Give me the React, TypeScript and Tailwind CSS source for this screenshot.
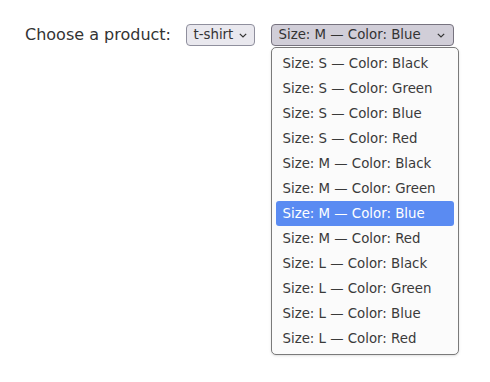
import React from 'react';

const options = [
  'Size: S — Color: Black',
  'Size: S — Color: Green',
  'Size: S — Color: Blue',
  'Size: S — Color: Red',
  'Size: M — Color: Black',
  'Size: M — Color: Green',
  'Size: M — Color: Blue',
  'Size: M — Color: Red',
  'Size: L — Color: Black',
  'Size: L — Color: Green',
  'Size: L — Color: Blue',
  'Size: L — Color: Red',
];

const Chevron = () => (
  <svg width="8" height="5" viewBox="0 0 8 5" className="shrink-0">
    <path d="M0.8 0.8 L4 4 L7.2 0.8" fill="none" stroke="#333" strokeWidth="1.2" />
  </svg>
);

export default function App() {
  return (
    <div className="w-[490px] h-[382px] bg-white font-['DejaVu_Sans',sans-serif] text-[#333]">
      <div className="flex items-center pt-[24px] pl-[25px]">
        <span className="text-[16px] leading-[22px] mr-[15.5px]">Choose a product:</span>
        <div className="flex items-center justify-between w-[69px] h-[22px] pl-[6px] pr-[7px] rounded-[4px] border border-[#8f8f9d] bg-[#e9e8ee] text-[13.333px] mr-[16px]">
          <span>t-shirt</span>
          <Chevron />
        </div>
        <div className="relative">
          <div className="flex items-center justify-between w-[183px] h-[22px] pl-[6px] pr-[8px] rounded-[4px] border border-[#77737f] bg-[#d1ced8] text-[13.333px]">
            <span>Size: M — Color: Blue</span>
            <Chevron />
          </div>
          <ul className="absolute left-0 top-[23px] w-[188px] bg-[#fbfbfb] border border-[#7a7a7a] rounded-[5px] py-[3px] px-[4px] shadow-sm">
            {options.map((o) => (
              <li
                key={o}
                className={
                  'h-[25px] leading-[25px] pl-[6px] text-[13.333px] rounded-[3px] ' +
                  (o === 'Size: M — Color: Blue' ? 'bg-[#5a8bf2] text-white' : 'text-[#3a3a3a]')
                }
              >
                {o}
              </li>
            ))}
          </ul>
        </div>
      </div>
    </div>
  );
}
